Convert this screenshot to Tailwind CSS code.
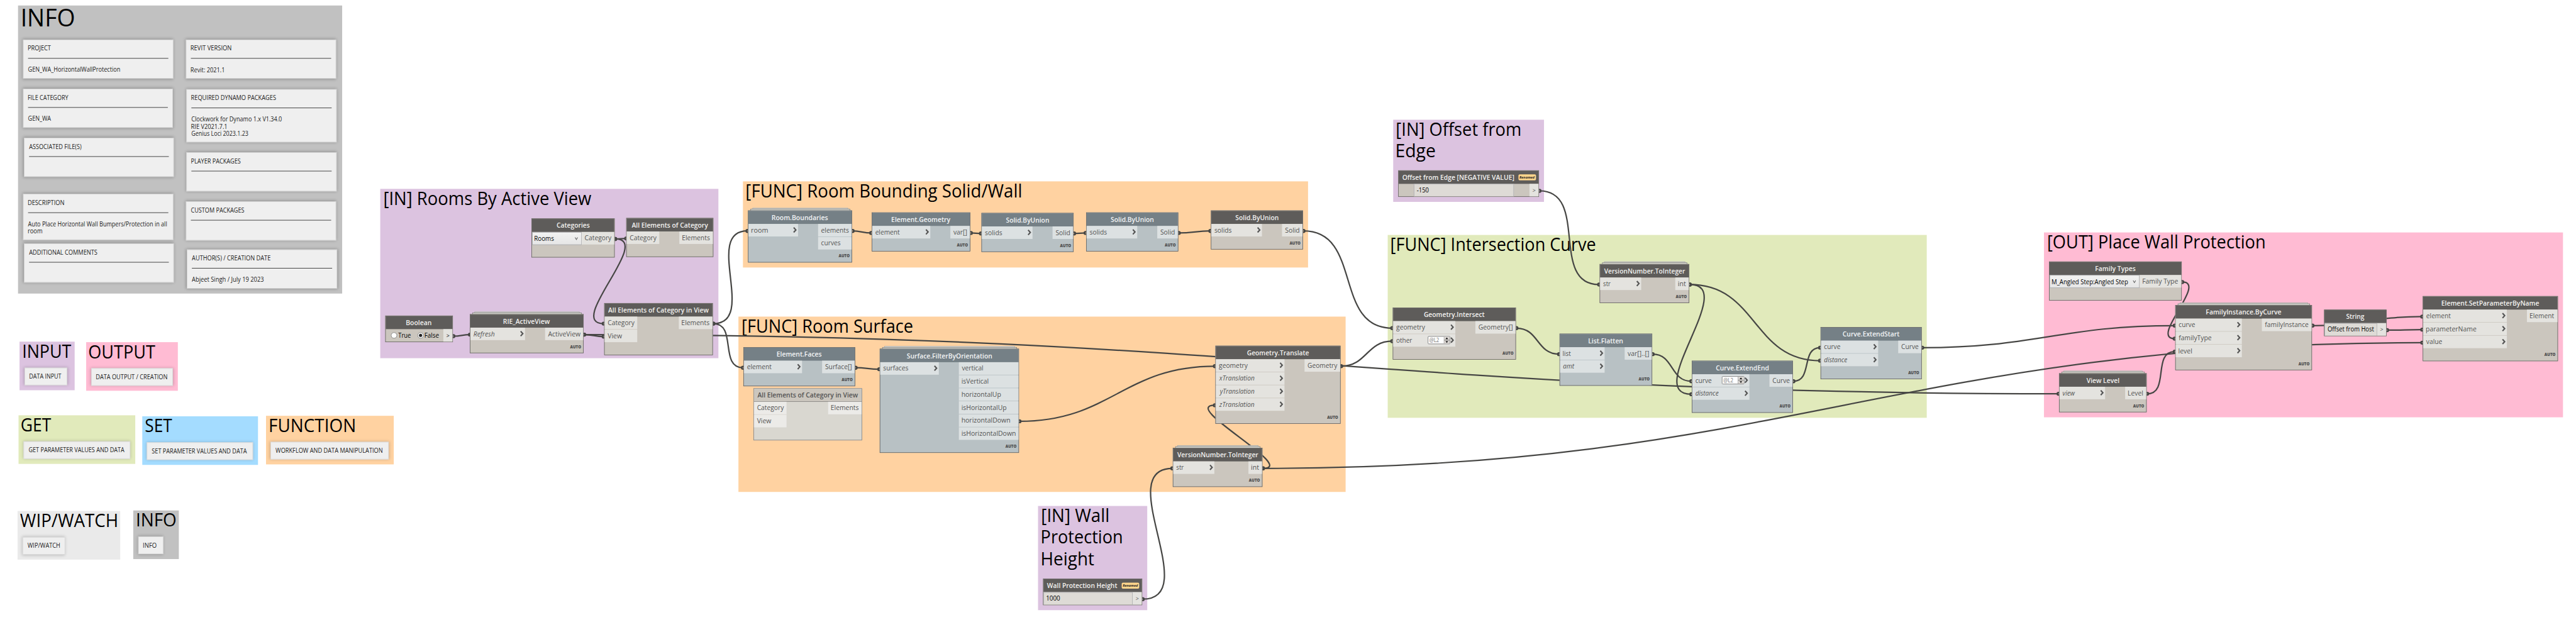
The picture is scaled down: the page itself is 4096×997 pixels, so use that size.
<!DOCTYPE html>
<html lang="en">
<head>
<meta charset="utf-8">
<title>Dynamo graph – Horizontal Wall Protection</title>
<script src="https://cdn.jsdelivr.net/npm/@tailwindcss/browser@4"></script>
</head>
<body class="bg-white overflow-hidden">
<div class="w-[4096px] h-[997px] overflow-hidden">
<main id="stage" class="relative w-[5142px] h-[1252px] origin-top-left scale-[0.79658] font-['Open_Sans','Noto_Sans',sans-serif] text-[13px] leading-[25px] text-[#535353]"></main>
</div>
<script>
// Text run whose ink box is w units wide; condensed or widened by fit() after insertion.
const T = (s, w, c = '') => `<span class="inline-block whitespace-nowrap ${c}" style="width:${w}px"><span data-fit="${w}" class="inline-block origin-left">${s}</span></span>`;

const W = { // known ink widths of port labels
  Category: 54, Elements: 55, View: 28.5, room: 32.4, elements: 55.4, curves: 38.7, element: 49.4, 'var[]': 27.3,
  solids: 34.4, Solid: 28.5, 'Surface[]': 53.4, surfaces: 50, vertical: 42.7, isVertical: 53.4, horizontalUp: 78.3,
  isHorizontalUp: 89.4, horizontalDown: 96, isHorizontalDown: 107, geometry: 58, xTranslation: 70.7, yTranslation: 70.7,
  zTranslation: 70.7, Geometry: 59.8, str: 15.6, int: 15.6, other: 32.4, 'Geometry[]': 68.8, list: 16, amt: 23,
  'var[]..[]': 42.7, curve: 32.4, distance: 47, Curve: 34.5, familyType: 65.4, level: 26.8, familyInstance: 87,
  view: 25, Level: 30, parameterName: 100, value: 31.6, Element: 48.6, Refresh: 42, ActiveView: 64.7, 'Family Type': 70.4
};
const ITAL = ['Refresh', 'xTranslation', 'yTranslation', 'zTranslation', 'amt', 'distance', 'view'];

// Colour themes: header, body, port, border, title
const TH = {
  g: ['bg-[#5e5c5a] text-[#f3f2f0]', 'bg-[#cbc6be]', 'bg-[#e4e3df]', 'border-[#5e5c5a]'],
  b: ['bg-[#758086] text-[#f3f5f6]', 'bg-[#b8c1c4]', 'bg-[#dce1e2]', 'border-[#5e5c5a]'],
  f: ['bg-[#cbc6be] text-[#535353] border-b border-[#807f7d]', 'bg-[#d9d7d0]', 'bg-[#ecebe8]', 'border-[#807f7d]']
};

const groups = [
  [36, 11, 647, 575, 'bg-[#c1c1c1]', 8.7, [['INFO', 102.4]], 1],
  [39, 682, 110, 97, 'bg-[#dcc3e0]', 7.8, [['INPUT', 95.7]]],
  [172, 683, 183, 97, 'bg-[#ffbbd3]', 6.3, [['OUTPUT', 132.3]]],
  [37, 829, 233, 97, 'bg-[#e1eabb]', 5.8, [['GET', 59.6]]],
  [284, 831, 231, 97, 'bg-[#a4dcff]', 6.3, [['SET', 53.9]]],
  [531, 830, 255, 97, 'bg-[#ffd2a1]', 7.8, [['FUNCTION', 169]]],
  [35, 1020, 205, 97, 'bg-[#eaeaea]', 5.2, [['WIP/WATCH', 193]]],
  [266, 1019, 91, 97, 'bg-[#c1c1c1]', 7.5, [['INFO', 76.9]]],
  [759, 377, 675, 338, 'bg-[#dcc3e0]', 7.8, [['[IN] Rooms By Active View', 414]]],
  [1483, 362, 1128, 172, 'bg-[#ffd2a1]', 7.3, [['[FUNC] Room Bounding Solid/Wall', 547.6]]],
  [1474, 632, 1212, 350, 'bg-[#ffd2a1]', 7.5, [['[FUNC] Room Surface', 340]]],
  [2072, 1010, 218, 208, 'bg-[#dcc3e0]', 7.5, [['[IN] Wall', 131.8], ['Protection', 159], ['Height', 103.6]]],
  [2781, 239, 301, 164, 'bg-[#dcc3e0]', 6.8, [['[IN] Offset from', 246.3], ['Edge', 77]]],
  [2770, 469, 1076, 365, 'bg-[#e1eabb]', 7, [['[FUNC] Intersection Curve', 408]]],
  [4080, 464, 1036, 369, 'bg-[#ffbbd3]', 7.5, [['[OUT] Place Wall Protection', 432]]]
];

const cards = [
  [46.4, 78.5, 78, 'PROJECT', 46.4, [['GEN_WA_HorizontalWallProtection', 183.2]]],
  [45.5, 176.5, 78, 'FILE CATEGORY', 80.8, [['GEN_WA', 46.4]]],
  [47.7, 275.2, 78, 'ASSOCIATED FILE(S)', 105, []],
  [46.4, 387.3, 92, 'DESCRIPTION', 72, [['Auto Place Horizontal Wall Bumpers/Protection in all', 277.3], ['room', 28]]],
  [47.7, 486.4, 78, 'ADDITIONAL COMMENTS', 136.4, []],
  [371.4, 79.3, 78, 'REVIT VERSION', 80.8, [['Revit: 2021.1', 65.7]]],
  [372.4, 177.5, 106, 'REQUIRED DYNAMO PACKAGES', 169, [['Clockwork for Dynamo 1.x V1.34.0', 180.4], ['RIE V2021.7.1', 69.8], ['Genius Loci 2023.1.23', 113.4]]],
  [372.4, 304.3, 78, 'PLAYER PACKAGES', 98.3, []],
  [371.4, 401.5, 78, 'CUSTOM PACKAGES', 106.5, []],
  [373.4, 498.3, 78, 'AUTHOR(S) / CREATION DATE', 157, [['Abjeet Singh / July 19 2023', 143.3]]]
];

const labels = [
  [48.7, 734, 85.2, 'DATA INPUT', 64.2], [181.5, 735, 163.6, 'DATA OUTPUT / CREATION', 141.7],
  [46.5, 881, 213.5, 'GET PARAMETER VALUES AND DATA', 192], [293.4, 883, 211.8, 'SET PARAMETER VALUES AND DATA', 190.4],
  [540.3, 882, 235.8, 'WORKFLOW AND DATA MANIPULATION', 213.4], [44.5, 1072, 85.8, 'WIP/WATCH', 64.9], [275.6, 1071, 50.2, 'INFO', 26.7]
];

// x, y, w, theme, title, title width, inputs, input width, outputs, output width, options
const nodes = [
  [1250, 435, 174, 'g', 'All Elements of Category', 152.4, ['Category'], 65, ['Elements'], 67, { noauto: 1, nochev: 1 }],
  [1206, 605, 217, 'g', 'All Elements of Category in View', 201, ['Category', 'View'], 65, ['Elements'], 67, { noauto: 1, nochev: 1 }],
  [938, 627, 227, 'g', 'RIE_ActiveView', 92.7, ['Refresh'], 109, ['ActiveView'], 76, { stack: 1 }],
  [1493, 420, 208, 'b', 'Room.Boundaries', 111.5, ['room'], 99, ['elements', 'curves'], 67, { stack: 1 }],
  [1740, 424, 197, 'b', 'Element.Geometry', 117, ['element'], 116, ['var[]'], 39, {}],
  [1959, 425, 184, 'b', 'Solid.ByUnion', 86.2, ['solids'], 101, ['Solid'], 41, {}],
  [2168, 424, 184, 'b', 'Solid.ByUnion', 86.2, ['solids'], 101, ['Solid'], 41, {}],
  [2417, 420, 184, 'g', 'Solid.ByUnion', 86.2, ['solids'], 101, ['Solid'], 41, {}],
  [1484, 693, 223, 'b', 'Element.Faces', 89, ['element'], 116, ['Surface[]'], 65, {}],
  [1504, 775, 217, 'f', 'All Elements of Category in View', 201, ['Category', 'View'], 65, ['Elements'], 67, { noauto: 1, nochev: 1 }],
  [1756, 696, 278, 'b', 'Surface.FilterByOrientation', 170.4, ['surfaces'], 117, ['vertical', 'isVertical', 'horizontalUp', 'isHorizontalUp', 'horizontalDown', 'isHorizontalDown'], 119, { stack: 1 }],
  [2426, 690, 250, 'g', 'Geometry.Translate', 123.6, ['geometry', 'xTranslation', 'yTranslation', 'zTranslation'], 137, ['Geometry'], 71, {}],
  [2341, 894, 179, 'g', 'VersionNumber.ToInteger', 162, ['str'], 82, ['int'], 27, { stack: 1 }],
  [2780, 614, 246, 'g', 'Geometry.Intersect', 121.4, ['geometry', 'other'], 124, ['Geometry[]'], 80, { spin: 1 }],
  [3193, 527, 179, 'g', 'VersionNumber.ToInteger', 162, ['str'], 82, ['int'], 27, { stack: 1 }],
  [3113, 666, 185, 'b', 'List.Flatten', 68.8, ['list', 'amt'], 89, ['var[]..[]'], 54, {}],
  [3377, 720, 202, 'b', 'Curve.ExtendEnd', 106, ['curve', 'distance'], 114, ['Curve'], 46, { spin: 0 }],
  [3634, 653, 202, 'b', 'Curve.ExtendStart', 113.5, ['curve', 'distance'], 114, ['Curve'], 46, {}],
  [4342, 609, 273, 'g', 'FamilyInstance.ByCurve', 149.3, ['curve', 'familyType', 'level'], 132, ['familyInstance'], 99, { stack: 1 }],
  [4110, 745, 175, 'g', 'View Level', 65, ['view'], 91, ['Level'], 42, { stack: 1 }],
  [4836, 591, 270, 'g', 'Element.SetParameterByName', 194, ['element', 'parameterName', 'value'], 167, ['Element'], 61, {}]
];

const wires = [
  [905, 671, 938, 668], [1166, 668, 1205, 672], [1166, 668, 4109, 786], [1228, 477, 1250, 476], [1228, 477, 1205, 646],
  [1424, 646, 1492, 461], [1424, 646, 1483, 734], [1702, 461, 1739, 465], [1938, 465, 1958, 466], [2144, 466, 2167, 465],
  [2353, 465, 2416, 461], [2602, 461, 2779, 655], [1708, 734, 1755, 737], [2035, 841, 2425, 731], [2677, 731, 2779, 681],
  [2521, 935, 2425, 809], [2521, 935, 4835, 684], [2281, 1196, 2340, 935], [3073, 381, 3192, 568], [3027, 655, 3112, 707],
  [3299, 707, 3376, 761], [3373, 568, 3376, 787], [3373, 568, 3633, 720], [3580, 761, 3633, 694], [3837, 694, 4341, 650],
  [4356, 563, 4341, 676], [4286, 786, 4341, 702], [4616, 650, 4835, 632], [4765, 659, 4835, 658]
];

const chev = '<svg class="block mr-[2px] mb-[2px]" width="8" height="12" viewBox="0 0 8 12"><path d="M1.3 1.2 5.6 6 1.3 10.8" fill="none" stroke="#555" stroke-width="2.7"/></svg>';
const down = '<svg class="block" width="7" height="7" viewBox="0 0 7 7"><path d="M1 1 3.5 5.2 6 1" fill="none" stroke="#666" stroke-width="1.4"/></svg>';
const spinner = `<span class="ml-auto mb-[1px] flex w-[45px] h-[16px] border border-[#707070] rounded-[2px] bg-white text-[11px] leading-[14px] text-[#777]"><span class="flex-1 pl-[1.5px]">${T('@L2', 19.5)}</span>
  <svg width="12" height="14" viewBox="0 0 12 14"><path d="M0 0h12v14H0z" fill="#d9d5d1"/><path d="M0 0v14M0 7h12" stroke="#707070"/><path d="M6 1.6 8.6 5H3.4zM6 12.4 3.4 9h5.2z" fill="#111"/></svg></span>`;
const head = (th, t, w) => `<div class="h-[26px] leading-[26px] font-semibold flex justify-center ${TH[th][0]}">${T(t, w)}</div>`;
const outPort = '<div class="ml-auto w-[18px] h-[25px] bg-[#e4e3df] text-[12px] flex justify-center">' + T('&gt;', 6.5) + '</div>';

let h = '';
for (const [x, y, w, ht, bg, pad, lines, big] of groups)
  h += `<section class="absolute ${bg} text-black ${big ? 'text-[47px] leading-[57px]' : 'text-[35.5px] leading-[43px]'}" style="left:${x}px;top:${y}px;width:${w}px;height:${ht}px;padding-left:${pad}px"><div class="flex flex-col items-start ${big ? '-mt-1' : '-mt-[3px]'}">${lines.map(l => T(l[0], l[1], 'shrink-0')).join('')}</div></section>`;

for (const [x, y, ht, t, tw, body] of cards)
  h += `<article class="absolute w-[299.5px] bg-[#efefef] border border-[#cfcfcf] shadow-[0_0_6px_1px_rgba(0,0,0,0.28)] px-[9px] pt-[9px] text-[#222] leading-[14.4px]" style="left:${x}px;top:${y}px;height:${ht}px"><div class="flex">${T(t, tw)}</div><div class="mt-[12.6px] h-px bg-[#1c1c1c]"></div><div class="mt-[14.6px] flex flex-col items-start">${body.map(l => T(l[0], l[1])).join('')}</div></article>`;

for (const [x, y, w, t, tw] of labels)
  h += `<article class="absolute h-[34.7px] bg-[#efefef] border border-[#d6d6d6] shadow-[0_0_6px_1px_rgba(0,0,0,0.2)] px-[9px] pt-[9px] text-[#222] leading-[14.4px] flex" style="left:${x}px;top:${y}px;width:${w}px">${T(t, tw)}</article>`;

let p = '';
for (const [a, b, c, d] of wires) {
  const o = 0.45 * Math.hypot(c - a, d - b);
  p += `<path d="M${a} ${b}C${a + o} ${b} ${c - o} ${d} ${c} ${d}"/><circle cx="${a}" cy="${b}" r="2.6"/><circle cx="${c}" cy="${d}" r="2.6"/>`;
}
h += `<svg class="absolute inset-0" width="5142" height="1252" viewBox="0 0 5142 1252" fill="none" stroke="#464644" stroke-width="2.8">${p}</svg>`;

for (const [x, y, w, th, t, tw, ins, iw, outs, ow, o] of nodes) {
  const c = TH[th];
  if (o.stack) h += `<div class="absolute h-[10px] bg-[#dcdcd8] border border-[#a5a5a3]" style="left:${x + 8.5}px;top:${y - 5.5}px;width:${w - 17}px"></div><div class="absolute h-[10px] bg-[#dcdcd4] border border-[#7c7c7a]" style="left:${x + 4.5}px;top:${y - 3}px;width:${w - 9}px"></div>`;
  const n = Math.max(ins.length, outs.length);
  h += `<div class="absolute border ${c[3]} ${c[1]}" style="left:${x}px;top:${y}px;width:${w}px;height:${52 + 26 * n}px">${head(th, t, tw)}
  <div class="flex justify-between" style="height:${26 * n - 1}px"><div class="flex flex-col gap-px" style="width:${iw}px">${ins.map((s, i) => `<div class="h-[25px] flex items-center pl-[5.5px] ${c[2]}">${T(s, W[s], ITAL.includes(s) ? 'italic' : '')}${o.spin === i ? spinner : '<span class="ml-auto"></span>'}${o.nochev ? '' : chev}</div>`).join('')}</div>
  <div class="flex flex-col gap-px" style="width:${ow}px">${outs.map(s => `<div class="h-[25px] flex pl-[5.8px] ${c[2]}">${T(s, W[s])}</div>`).join('')}</div></div>
  ${o.noauto ? '' : `<div class="flex justify-end pr-[3.7px] text-[8.2px] leading-[26px] font-extrabold text-[#4c4c4c]">${T('AUTO', 22.5)}</div>`}</div>`;
}

const badge = '<span class="w-[35px] h-[12.5px] rounded-[2.5px] bg-[#ffd58c] text-[#222] text-[7px] leading-[12.5px] font-bold italic flex justify-center">' + T('Renamed', 31) + '</span>';
const box = 'h-[25px] bg-[#dedbd6] border-x border-t border-[#a9a9ad] text-black text-[12.5px] leading-[24px] flex pl-[4.5px]';
const radio = (on) => `<svg width="13" height="13" viewBox="0 0 13 13"><circle cx="6.5" cy="6.5" r="5.7" fill="#fff" stroke="#707070"/>${on ? '<circle cx="6.5" cy="6.5" r="3.2" fill="#222"/>' : ''}</svg>`;
const shell = 'absolute border border-[#5e5c5a] bg-[#cbc6be]';
const drop = 'h-[26px] border border-[#abadb3] bg-linear-to-b from-[#f2f2f2] to-[#e6e6e6] text-black leading-[23px] flex items-center justify-between pl-[4px] pr-[6px]';

h += `<div class="${shell} left-[1061px] top-[436px] w-[166px] h-[78px]">${head('g', 'Categories', 66)}
  <div class="flex"><div class="${drop} w-[99px]">${T('Rooms', 38.6)}${down}</div><div class="flex-1 h-[25px] bg-[#e4e3df] pl-[5.8px] flex">${T('Category', 54)}</div></div></div>
<div class="${shell} left-[4090px] top-[522px] w-[265px] h-[78px]">${head('g', 'Family Types', 79.6)}
  <div class="flex"><div class="${drop} w-[180px]">${T('M_Angled Step:Angled Step', 152)}${down}</div><div class="flex-1 h-[25px] bg-[#e4e3df] pl-[6px] flex">${T('Family Type', 70.4)}</div></div></div>
<div class="${shell} left-[769px] top-[630px] w-[135px] h-[53px]">${head('g', 'Boolean', 50.5)}
  <div class="flex items-center text-black"><span class="pl-[9.5px] mb-[1px]">${radio(0)}</span>${T('True', 25, 'ml-[2px]')}<span class="ml-[13px] mb-[1px]">${radio(1)}</span>${T('False', 28, 'ml-[2px]')}${outPort}</div></div>
<div class="${shell} left-[2082px] top-[1155px] w-[198px] h-[53px]"><div class="h-[26px] leading-[26px] font-semibold flex items-center justify-between pl-[7px] pr-[5px] ${TH.g[0]}">${T('Wall Protection Height', 140)}${badge}</div>
  <div class="flex"><div class="${box} w-[178px]">${T('1000', 27)}</div>${outPort}</div></div>
<div class="${shell} left-[2791px] top-[340px] w-[281px] h-[53px]"><div class="h-[26px] leading-[26px] font-semibold flex items-center justify-between pl-[7px] pr-[5px] ${TH.g[0]}">${T('Offset from Edge [NEGATIVE VALUE]', 223.4)}${badge}</div>
  <div class="flex"><div class="${box} ml-[30px] w-[200px]">${T('-150', 24)}</div>${outPort}</div></div>
<div class="${shell} left-[4639px] top-[618px] w-[125px] h-[53px]">${head('g', 'String', 36.4)}
  <div class="flex"><div class="${box} w-[105px]">${T('Offset from Host', 93.5)}</div>${outPort}</div></div>`;

document.getElementById('stage').innerHTML = h;

// Scale every run horizontally so its ink box equals the requested width.
const ctx = document.createElement('canvas').getContext('2d');
function fit(e) {
  const cs = getComputedStyle(e);
  ctx.font = `${cs.fontStyle} ${cs.fontWeight} ${cs.fontSize} ${cs.fontFamily}`;
  const m = ctx.measureText(e.textContent);
  const s = +e.dataset.fit / (m.actualBoundingBoxLeft + m.actualBoundingBoxRight);
  e.style.transform = `translateX(${m.actualBoundingBoxLeft * s}px) scaleX(${s})`;
}
const runs = [...document.querySelectorAll('[data-fit]')];
const fitAll = () => runs.forEach(fit);
fitAll();
addEventListener('load', fitAll);
const ro = new ResizeObserver(list => list.forEach(r => fit(r.target)));
runs.forEach(e => ro.observe(e));
</script>
</body>
</html>
